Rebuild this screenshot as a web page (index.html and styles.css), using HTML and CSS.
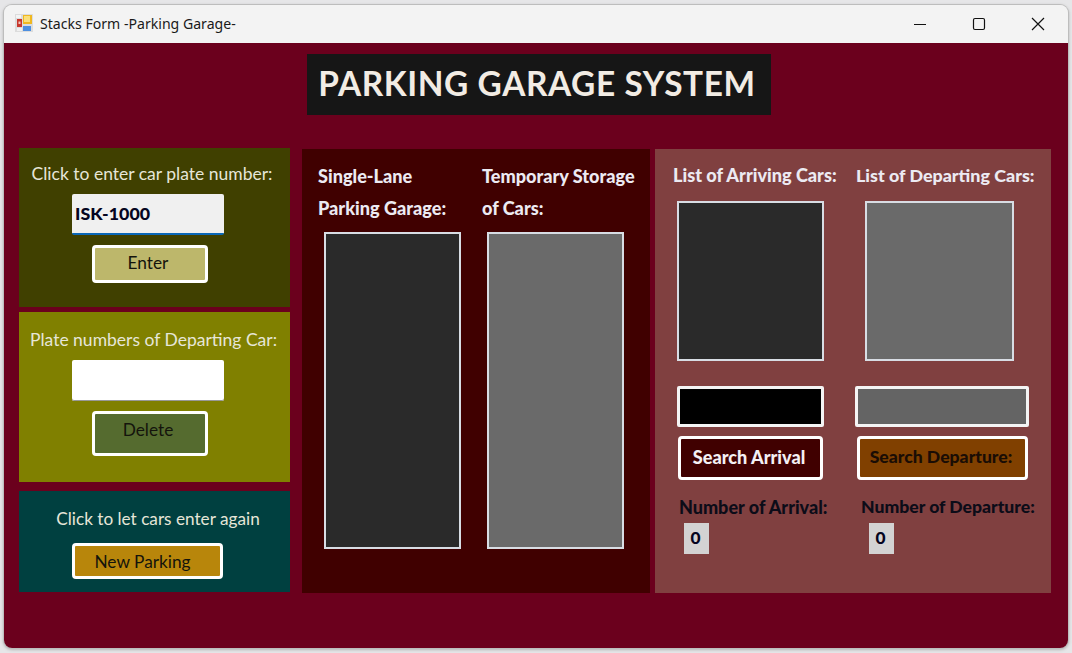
FILE: index.html
```html
<!DOCTYPE html>
<html lang="en">
<head>
<meta charset="utf-8">
<title>Stacks Form -Parking Garage-</title>
<link rel="stylesheet" href="styles.css">
</head>
<body>
<div class="window">
  <header class="titlebar">
    <svg class="app-icon" width="18" height="18" viewBox="0 0 18 18">
      <rect width="18" height="18" fill="#dcdcdc"/>
      <rect x="1" y="1" width="5" height="3" fill="#f4f4f4"/>
      <rect x="2" y="5" width="5" height="8" fill="#c8372d"/>
      <rect x="3.5" y="7.5" width="2" height="2.5" fill="#f3c4bc"/>
      <rect x="8" y="1" width="9" height="9" fill="#f0b820"/>
      <rect x="9" y="2" width="6" height="6" fill="#fbe07a"/>
      <rect x="8" y="12" width="8" height="5" fill="#4d8fe0"/>
      <rect x="2" y="14" width="5" height="3" fill="#f0f0f0"/>
    </svg>
    <span class="window-title">Stacks Form -Parking Garage-</span>
    <div class="controls">
      <svg class="control" width="14" height="14" viewBox="0 0 14 14"><path d="M1 7.5h12" stroke="#111" stroke-width="1.2" fill="none"/></svg>
      <svg class="control" width="14" height="14" viewBox="0 0 14 14"><rect x="1.5" y="1.5" width="11" height="11" rx="1.5" stroke="#111" stroke-width="1.2" fill="none"/></svg>
      <svg class="control" width="14" height="14" viewBox="0 0 14 14"><path d="M1 1l12 12M13 1L1 13" stroke="#111" stroke-width="1.2" fill="none"/></svg>
    </div>
  </header>
  <main class="form">
    <h1 class="banner">PARKING GARAGE SYSTEM</h1>
    <div class="columns">
      <div class="left-col">
        <section class="panel panel-enter">
          <p class="prompt">Click to enter car plate number:</p>
          <div class="textbox textbox-active">ISK-1000</div>
          <button class="btn btn-enter">Enter</button>
        </section>
        <section class="panel panel-delete">
          <p class="prompt">Plate numbers of Departing Car:</p>
          <div class="textbox"></div>
          <button class="btn btn-delete">Delete</button>
        </section>
        <section class="panel panel-new">
          <p class="prompt">Click to let cars enter again</p>
          <button class="btn btn-new">New Parking</button>
        </section>
      </div>
      <section class="middle">
        <div class="stack-col stack-garage">
          <h2 class="heading heading-two">Single-Lane<br>Parking Garage:</h2>
          <div class="listbox listbox-tall list-dark"></div>
        </div>
        <div class="stack-col stack-temp">
          <h2 class="heading heading-two">Temporary Storage<br>of Cars:</h2>
          <div class="listbox listbox-tall list-grey"></div>
        </div>
      </section>
      <section class="right">
        <div class="side-col side-arrive">
          <h2 class="heading">List of Arriving Cars:</h2>
          <div class="listbox listbox-short list-dark"></div>
          <div class="search-field field-black"></div>
          <button class="btn btn-search btn-arrive">Search Arrival</button>
          <p class="count-label">Number of Arrival:</p>
          <div class="count">0</div>
        </div>
        <div class="side-col side-depart">
          <h2 class="heading">List of Departing Cars:</h2>
          <div class="listbox listbox-short list-grey"></div>
          <div class="search-field field-grey"></div>
          <button class="btn btn-search btn-depart">Search Departure:</button>
          <p class="count-label">Number of Departure:</p>
          <div class="count">0</div>
        </div>
      </section>
    </div>
  </main>
</div>
</body>
</html>
```
FILE: styles.css
```css
* { box-sizing: border-box; }
html, body { margin: 0; height: 100%; }
body {
  background: #e6e6e8;
  padding: 5px 4px;
  overflow: hidden;
  font-family: Lato, "Noto Sans", sans-serif;
}
.window {
  width: 1064px;
  height: 643px;
  border-radius: 8px;
  overflow: hidden;
  display: flex;
  flex-direction: column;
  box-shadow: 0 0 0 1px #bdbdbd, 0 1px 3px 1px #b5b5b5;
}
.titlebar {
  height: 38px;
  background: #f3f3f3;
  display: flex;
  align-items: center;
  padding-left: 11px;
  flex: none;
}
.app-icon { flex: none; margin-top: -2px; }
.window-title {
  margin-left: 7px;
  font: 14.1px "Noto Sans", "Open Sans", sans-serif;
  color: #1a1a1a;
  margin-top: -1px;
}
.controls {
  margin-left: auto;
  display: flex;
  gap: 45px;
  padding-right: 23px;
}
.control { display: block; }
.form {
  flex: 1;
  background: #6b001d;
  padding: 11px 0 0 15px;
}
.banner {
  margin: 0 0 33px 288px;
  width: 464px;
  height: 61px;
  padding-right: 4px;
  background: #161616;
  color: #f2ece4;
  font-size: 33.4px;
  font-weight: 700;
  line-height: 58px;
  text-align: center;
  letter-spacing: 0.6px;
  white-space: nowrap;
}
.columns { display: flex; align-items: flex-start; }
.left-col { width: 271px; display: flex; flex-direction: column; }
.panel {
  display: flex;
  flex-direction: column;
  align-items: flex-start;
}
.prompt {
  margin: 0;
  width: 100%;
  text-align: center;
  font-size: 17.5px;
  color: #e6e6d8;
  white-space: nowrap;
}
.panel-enter { background: #404000; height: 159px; padding-top: 15px; }
.panel-delete { background: #808000; height: 170px; margin-top: 5px; padding-top: 17px; }
.panel-new { background: #004040; height: 101px; margin-top: 9px; padding-top: 17px; }
.panel-enter .prompt { padding-right: 5px; }
.panel-delete .prompt { padding-right: 2px; }
.panel-new .prompt { padding-left: 7px; font-size: 17.2px; }
.textbox {
  width: 152px;
  margin: 10px 0 0 53px;
  height: 41px;
  background: #fff;
  border-radius: 2px;
  color: #050520;
  font-size: 17.8px;
  font-weight: 900;
  line-height: 38px;
  padding-left: 3px;
}
.textbox-active { background: #f0f0f0; border-bottom: 2px solid #0a67b8; }
.panel-delete .textbox { margin-top: 10px; box-shadow: inset 0 -1px 0 #999; }
.btn {
  display: block;
  padding: 0;
  border: 3px solid #fff;
  border-radius: 4px;
  font-family: inherit;
  font-size: 17.3px;
  color: #14140c;
  text-align: center;
}
.btn-enter { width: 116px; height: 38px; margin: 10px 0 0 73px; background: #bdb76b; padding: 0 4px 3px 0; }
.btn-delete { width: 116px; height: 45px; margin: 10px 0 0 73px; background: #556b2f; padding: 0 4px 8px 0; }
.btn-new { width: 151px; height: 36px; margin: 14px 0 0 53px; background: #b8860b; padding-right: 10px; }
.middle {
  width: 348px;
  height: 444px;
  margin: 1px 0 0 12px;
  background: #400000;
  display: flex;
  padding-left: 16px;
}
.stack-col { width: 164px; padding-top: 11px; }
.heading {
  margin: 0;
  font-size: 18.1px;
  font-weight: 900;
  color: #eceaf2;
  line-height: 28px;
  white-space: nowrap;
}
.heading-two { line-height: 32px; height: 72px; }
.listbox { border: 2px solid #d8dde4; }
.listbox-tall { width: 137px; height: 317px; }
.stack-garage .listbox-tall { margin-left: 6px; }
.stack-temp .listbox-tall { margin-left: 5px; }
.list-dark { background: #2a2a2a; }
.list-grey { background: #6a6a6a; }
.right {
  width: 396px;
  height: 444px;
  margin: 1px 0 0 5px;
  background: #804040;
  display: flex;
}
.side-col { padding-top: 12px; display: flex; flex-direction: column; align-items: flex-start; }
.side-arrive { width: 201px; padding-left: 18px; }
.side-depart { width: 195px; }
.side-depart .heading { font-size: 17.9px; }
.listbox-short { height: 160px; margin-top: 12px; }
.side-arrive .listbox-short { width: 147px; margin-left: 4px; }
.side-depart .listbox-short { width: 149px; margin-left: 9px; }
.search-field { height: 41px; margin-top: 25px; border: 3px solid #f4f4f4; border-radius: 2px; }
.field-black { width: 147px; margin-left: 4px; background: #000; }
.field-grey { width: 174px; margin-left: -1px; background: #646464; }
.btn-search {
  height: 44px;
  margin-top: 9px;
  font-size: 18.1px;
  font-weight: 900;
  padding-bottom: 3px;
  white-space: nowrap;
}
.btn-arrive { width: 145px; margin-left: 5px; padding-right: 3px; background: #400000; color: #f4f0f4; }
.btn-depart { width: 171px; margin-left: 1px; padding-right: 3px; background: #804000; color: #1a0d05; font-size: 17.6px; }
.count-label {
  margin: 16px 0 0;
  font-size: 18px;
  font-weight: 900;
  color: #0c0c18;
  line-height: 22px;
  white-space: nowrap;
}
.side-arrive .count-label { margin-left: 6px; }
.side-depart .count-label { margin-left: 5px; font-size: 17.6px; }
.count {
  width: 25px;
  height: 31px;
  margin-top: 5px;
  background: #d3d3d3;
  color: #050520;
  font-size: 17.3px;
  font-weight: 900;
  line-height: 30px;
  text-align: center;
  padding-right: 2px;
}
.side-arrive .count { margin-left: 11px; }
.side-depart .count { margin-left: 13px; }
```
